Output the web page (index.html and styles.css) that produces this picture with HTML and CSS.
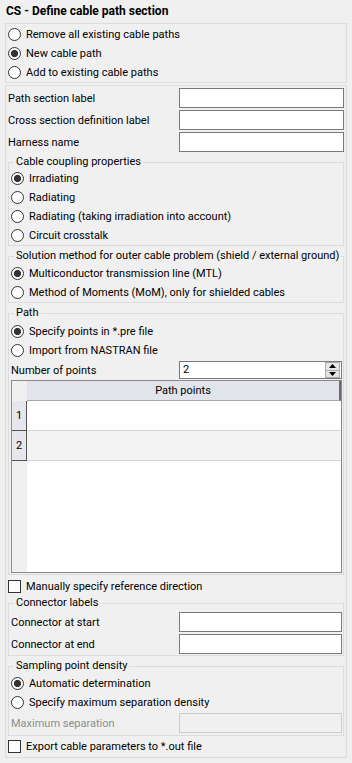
FILE: index.html
```html
<!DOCTYPE html>
<html lang="en">
<head>
<meta charset="UTF-8">
<meta name="viewport" content="width=device-width, initial-scale=1.0">
<title>CS - Define cable path section</title>
<link rel="stylesheet" href="styles.css">
</head>
<body>

<div class="panel">
    <div class="heading">CS - Define cable path section</div>

    <!-- Mode -->
    <div class="box box-mode">
        <div class="radio"><span class="mark"></span>Remove all existing cable paths</div>
        <div class="radio checked"><span class="mark"></span>New cable path</div>
        <div class="radio"><span class="mark"></span>Add to existing cable paths</div>
    </div>

    <div class="box box-main">
        <div class="field"><span class="label">Path section label</span><input class="text" type="text"></div>
        <div class="field"><span class="label">Cross section definition label</span><input class="text" type="text"></div>
        <div class="field"><span class="label">Harness name</span><input class="text" type="text"></div>

        <fieldset class="group group-coupling">
            <legend>Cable coupling properties</legend>
            <div class="radio checked"><span class="mark"></span>Irradiating</div>
            <div class="radio"><span class="mark"></span>Radiating</div>
            <div class="radio"><span class="mark"></span>Radiating (taking irradiation into account)</div>
            <div class="radio"><span class="mark"></span>Circuit crosstalk</div>
        </fieldset>

        <fieldset class="group group-solution">
            <legend>Solution method for outer cable problem (shield / external ground)</legend>
            <div class="radio checked"><span class="mark"></span>Multiconductor transmission line (MTL)</div>
            <div class="radio"><span class="mark"></span>Method of Moments (MoM), only for shielded cables</div>
        </fieldset>

        <fieldset class="group group-path">
            <legend>Path</legend>
            <div class="radio checked"><span class="mark"></span>Specify points in *.pre file</div>
            <div class="radio"><span class="mark"></span>Import from NASTRAN file</div>
            <div class="field field-spin">
                <span class="label">Number of points</span>
                <div class="spin">
                    <span class="spin-value">2</span>
                    <div class="spin-btns">
                        <span class="spin-btn"><svg width="7" height="4" viewBox="0 0 7 4"><path d="M3.5 0 L7 4 L0 4 Z" fill="#000"/></svg></span>
                        <span class="spin-btn"><svg width="7" height="4" viewBox="0 0 7 4"><path d="M0 0 L7 0 L3.5 4 Z" fill="#000"/></svg></span>
                    </div>
                </div>
            </div>
            <div class="grid">
                <div class="grid-head">
                    <div class="corner"></div>
                    <div class="head-cell">Path points</div>
                </div>
                <div class="grid-row">
                    <div class="row-head">1</div>
                    <div class="cell"></div>
                </div>
                <div class="grid-row alt">
                    <div class="row-head">2</div>
                    <div class="cell"></div>
                </div>
                <div class="grid-rest">
                    <div class="rest-side"></div>
                    <div class="rest-body"></div>
                </div>
            </div>
        </fieldset>

        <div class="check"><span class="mark"></span>Manually specify reference direction</div>

        <fieldset class="group group-connector">
            <legend>Connector labels</legend>
            <div class="field"><span class="label">Connector at start</span><input class="text" type="text"></div>
            <div class="field"><span class="label">Connector at end</span><input class="text" type="text"></div>
        </fieldset>

        <fieldset class="group group-sampling">
            <legend>Sampling point density</legend>
            <div class="radio checked"><span class="mark"></span>Automatic determination</div>
            <div class="radio"><span class="mark"></span>Specify maximum separation density</div>
            <div class="field disabled"><span class="label">Maximum separation</span><input class="text" type="text" disabled></div>
        </fieldset>

        <div class="check check-export"><span class="mark"></span>Export cable parameters to *.out file</div>
    </div>
</div>

</body>
</html>
```

FILE: styles.css
```css
* {
    box-sizing: border-box;
}
body {
    margin: 0;
    background-color: #f0f0f0;
    font-family: Roboto, "Liberation Sans", sans-serif;
    font-size: 11px;
    color: #000;
}
.panel {
    width: 352px;
    height: 763px;
    padding: 0 5px;
}
.heading {
    height: 23px;
    line-height: 22px;
    padding-left: 1px;
    font-size: 12px;
    font-weight: bold;
}

/* Boxes and group boxes */
.box {
    border: 1px solid #dcdcdc;
    padding: 1px 2px 0 2px;
}
.box-main {
    margin-top: 2px;
    padding-top: 2px;
    height: 673px;
}
.group {
    margin: 3px 0 0 0;
    padding: 0 1px 0 2px;
    border: 1px solid #dcdcdc;
    min-width: 0;
}
.group legend {
    margin-left: 3px;
    padding: 0 2px;
    line-height: 14px;
    height: 14px;
}
.group-solution { padding-top: 1px; }
.group-path { padding-top: 2px; padding-bottom: 1px; }
.group-connector { margin-top: 0; padding-top: 2px; padding-bottom: 1px; }
.group-sampling { padding-top: 1px; padding-bottom: 2px; }

/* Radios and checkboxes */
.radio, .check {
    display: flex;
    align-items: center;
    height: 19px;
    white-space: nowrap;
}
.radio .mark {
    width: 13px;
    height: 13px;
    margin-right: 5px;
    border: 1px solid #333;
    border-radius: 50%;
    background-color: #fff;
    flex: none;
}
.radio.checked .mark {
    background: radial-gradient(circle, #333 3.3px, #fff 3.9px);
}
.check { margin-top: 2px; }
.check-export { margin-top: 1px; }
.check .mark {
    width: 13px;
    height: 13px;
    margin-right: 5px;
    border: 1px solid #333;
    background-color: #fff;
    flex: none;
}

/* Label + input rows */
.field {
    display: flex;
    align-items: center;
    height: 20px;
    margin-bottom: 2px;
}
.field .label {
    flex: 1;
    white-space: nowrap;
}
.text {
    width: 165px;
    height: 20px;
    margin: 0;
    border: 1px solid #7a7a7a;
    background-color: #fff;
    font: inherit;
    padding: 0 3px;
}
.group .text { width: 163px; }
.group .field:last-child { margin-bottom: 0; }
.disabled { margin-top: 1px; }
.disabled .label { color: #8d8d8d; }
.disabled .text {
    border-color: #cccccc;
    background-color: #f0f0f0;
}

/* Spin box */
.field-spin { margin-bottom: 0; }
.spin {
    width: 163px;
    height: 18px;
    display: flex;
    border: 1px solid #7a7a7a;
    background-color: #fff;
}
.spin-value {
    flex: 1;
    padding-left: 3px;
    line-height: 16px;
}
.spin-btns {
    width: 15px;
    display: flex;
    flex-direction: column;
    margin: 0 1px 0 0;
}
.spin-btn {
    flex: 1;
    display: flex;
    align-items: center;
    justify-content: center;
    background-color: #e5e5e5;
    border: 1px solid #acacac;
}
.spin-btn + .spin-btn { border-top: none; }

/* Path points table */
.grid {
    height: 193px;
    display: flex;
    flex-direction: column;
    border: 1px solid #8a8a8a;
    background-color: #fff;
}
.grid-head {
    display: flex;
    height: 20px;
}
.corner {
    width: 15px;
    background-color: #f0f0f0;
}
.head-cell {
    flex: 1;
    text-align: center;
    line-height: 19px;
    background-color: #e2e4eb;
    border-right: 2px solid #6a6a6a;
    border-bottom: 1px solid #a8a8a8;
}
.grid-row {
    display: flex;
    height: 30px;
}
.row-head {
    width: 15px;
    text-align: center;
    line-height: 29px;
    background-color: #e6e7ec;
    border-right: 1px solid #555;
    border-bottom: 1px solid #555;
}
.cell {
    flex: 1;
    border-bottom: 1px solid #d4d4d4;
}
.alt .cell { background-color: #f3f3f3; }
.grid-rest {
    flex: 1;
    display: flex;
}
.rest-side {
    width: 15px;
    background-color: #f0f0f0;
}
.rest-body { flex: 1; }
```
